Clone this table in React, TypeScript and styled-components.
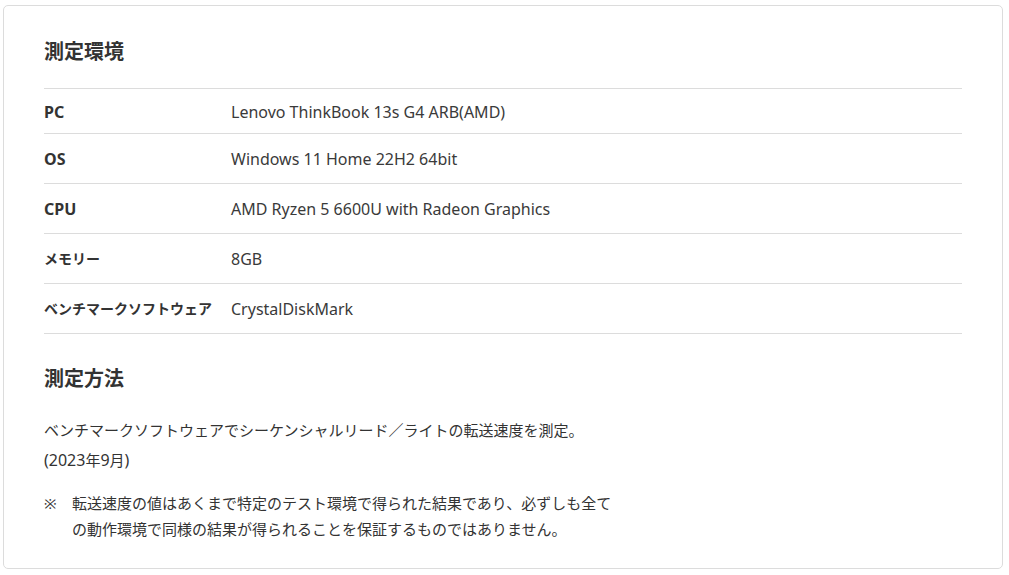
import React from 'react';
import styled, { createGlobalStyle } from 'styled-components';

const GlobalStyle = createGlobalStyle`
  html, body {
    margin: 0;
    padding: 0;
    background: #fff;
  }
  body {
    font-family: "Noto Sans", "Noto Sans CJK JP", sans-serif;
    color: #333;
  }
`;

const specs = [
    { label: 'PC', value: 'Lenovo ThinkBook 13s G4 ARB(AMD)' },
    { label: 'OS', value: 'Windows 11 Home 22H2 64bit' },
    { label: 'CPU', value: 'AMD Ryzen 5 6600U with Radeon Graphics' },
    { label: 'メモリー', value: '8GB' },
    { label: 'ベンチマークソフトウェア', value: 'CrystalDiskMark' },
];

const isLatin = (text: string) => /^[\x00-\x7f]+$/.test(text);

function App() {
    return (
        <Page>
            <GlobalStyle />
            <Card>
                <Heading>測定環境</Heading>
                <SpecTable>
                    {specs.map((row) => (
                        <SpecRow key={row.label}>
                            <SpecLabel $latin={isLatin(row.label)}>{row.label}</SpecLabel>
                            <SpecValue>{row.value}</SpecValue>
                        </SpecRow>
                    ))}
                </SpecTable>
                <Heading $spaced>測定方法</Heading>
                <Paragraph>
                    ベンチマークソフトウェアでシーケンシャルリード／ライトの転送速度を測定。
                    <br />
                    <Latin>(2023</Latin>年<Latin>9</Latin>月<Latin>)</Latin>
                </Paragraph>
                <Note>
                    <NoteMark>※</NoteMark>
                    <NoteText>
                        転送速度の値はあくまで特定のテスト環境で得られた結果であり、必ずしも全ての動作環境で同様の結果が得られることを保証するものではありません。
                    </NoteText>
                </Note>
            </Card>
        </Page>
    );
}

const Page = styled.div`
    padding: 5px 0 0 3px;
`;

const Card = styled.section`
    box-sizing: border-box;
    width: 1000px;
    height: 564px;
    border: 1px solid #dcdcdc;
    border-radius: 5px;
    padding: 31px 40px 0 40px;
`;

const Heading = styled.h2<{ $spaced?: boolean }>`
    margin: ${(p) => (p.$spaced ? '30px 0 21px' : '0 0 21px')};
    font-size: 20px;
    line-height: 30px;
    font-weight: 700;
    color: #333;
`;

const SpecTable = styled.div`
    display: flex;
    flex-direction: column;
    border-top: 1px solid #dcdcdc;
`;

const SpecRow = styled.div`
    display: flex;
    align-items: center;
    min-height: 49px;
    border-bottom: 1px solid #dcdcdc;

    &:first-child {
        box-sizing: border-box;
        min-height: 45px;
        padding-top: 1px;
    }
`;

const SpecLabel = styled.div<{ $latin?: boolean }>`
    flex: 0 0 187px;
    font-size: ${(p) => (p.$latin ? '16px' : '14px')};
    font-weight: 700;
    line-height: 22px;
`;

const SpecValue = styled.div`
    font-size: 16px;
    line-height: 22px;
    color: #3a3a3a;
`;

const Paragraph = styled.p`
    margin: 0;
    font-size: 15px;
    line-height: 30px;
`;

const Latin = styled.span`
    font-size: 16px;
`;

const Note = styled.div`
    display: flex;
    margin-top: 15px;
    font-size: 15px;
    line-height: 26px;
`;

const NoteMark = styled.span`
    flex: 0 0 28px;
`;

const NoteText = styled.span`
    width: 542px;
`;

export default App;
